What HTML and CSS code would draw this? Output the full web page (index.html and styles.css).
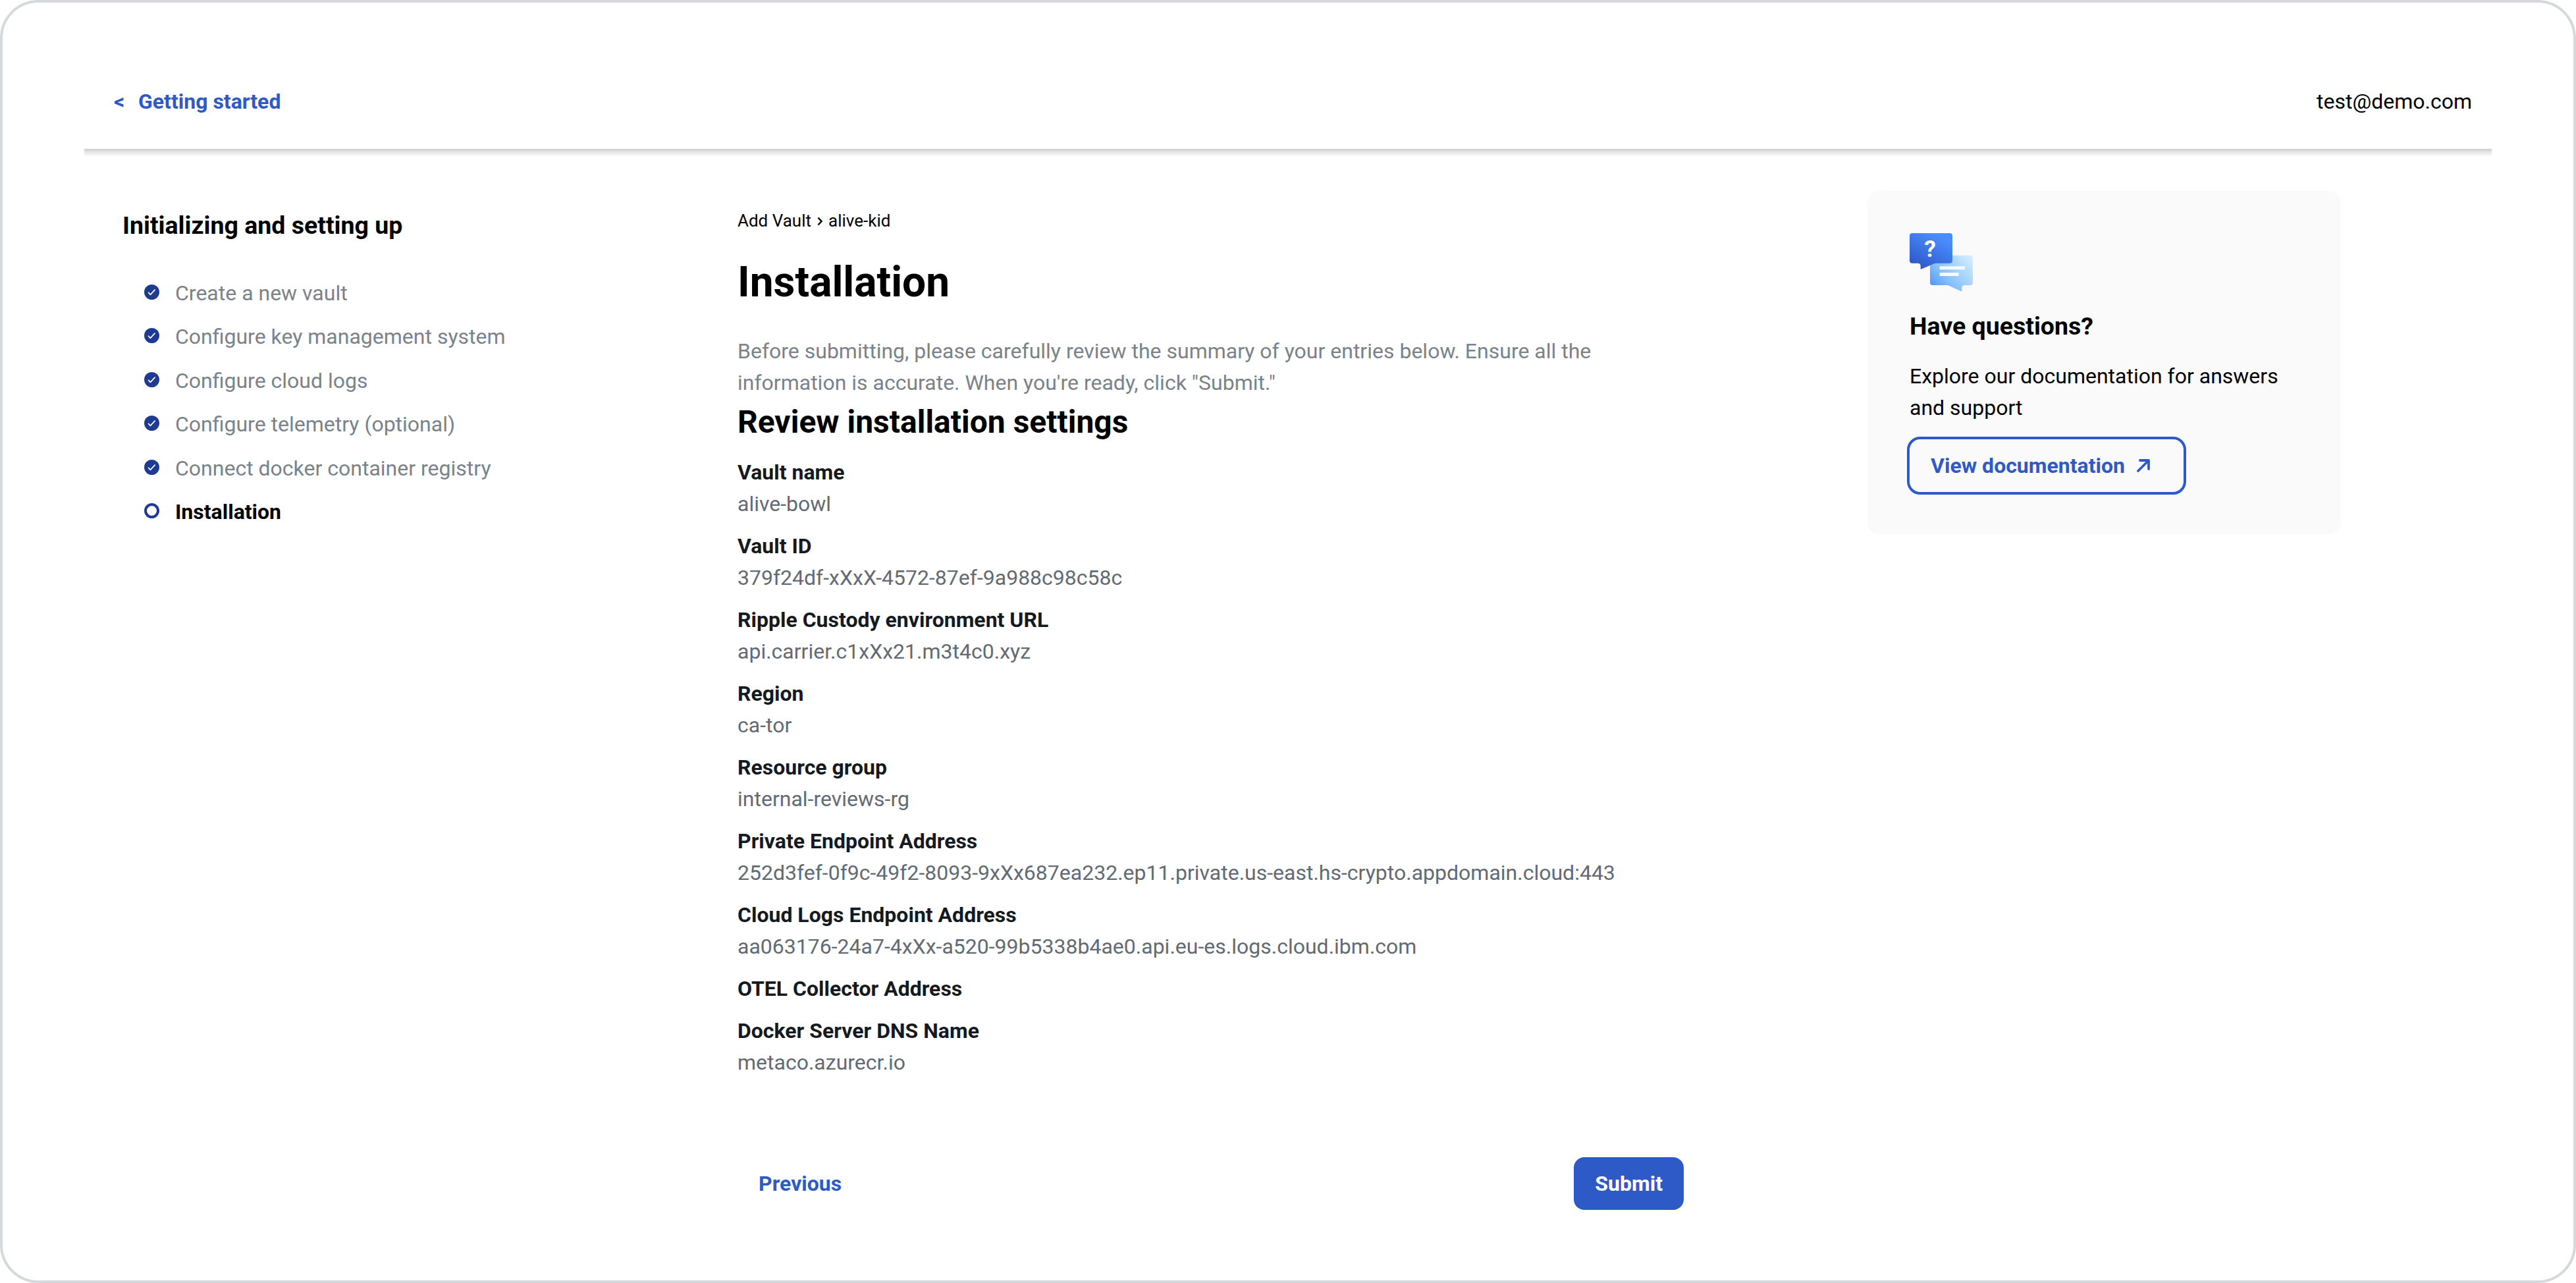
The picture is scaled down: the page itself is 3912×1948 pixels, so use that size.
FILE: index.html
```html
<!DOCTYPE html>
<html lang="en">
<head>
    <meta charset="UTF-8">
    <meta name="viewport" content="width=device-width, initial-scale=1.0">
    <title>Add Vault - Installation</title>
    <link rel="stylesheet" href="styles.css">
</head>
<body>
    <div class="page">
        <header class="header">
            <a class="back-link" href="#"><span class="back-arrow">&lt;</span>Getting started</a>
            <span class="user-email">test@demo.com</span>
        </header>
        <div class="divider"></div>

        <div class="content">
            <aside class="sidebar">
                <h3 class="sidebar-title">Initializing and setting up</h3>
                <ul class="steps">
                    <li class="step">
                        <svg class="step-icon" viewBox="0 0 24 24"><circle cx="12" cy="12" r="12"/><path d="M6.8 12.8l3 3.2 7-7.6"/></svg>
                        Create a new vault
                    </li>
                    <li class="step">
                        <svg class="step-icon" viewBox="0 0 24 24"><circle cx="12" cy="12" r="12"/><path d="M6.8 12.8l3 3.2 7-7.6"/></svg>
                        Configure key management system
                    </li>
                    <li class="step">
                        <svg class="step-icon" viewBox="0 0 24 24"><circle cx="12" cy="12" r="12"/><path d="M6.8 12.8l3 3.2 7-7.6"/></svg>
                        Configure cloud logs
                    </li>
                    <li class="step">
                        <svg class="step-icon" viewBox="0 0 24 24"><circle cx="12" cy="12" r="12"/><path d="M6.8 12.8l3 3.2 7-7.6"/></svg>
                        Configure telemetry (optional)
                    </li>
                    <li class="step">
                        <svg class="step-icon" viewBox="0 0 24 24"><circle cx="12" cy="12" r="12"/><path d="M6.8 12.8l3 3.2 7-7.6"/></svg>
                        Connect docker container registry
                    </li>
                    <li class="step current">
                        <span class="step-circle"></span>
                        Installation
                    </li>
                </ul>
            </aside>

            <main class="main">
                <nav class="breadcrumb">
                    <span>Add Vault</span>
                    <svg class="chevron" viewBox="0 0 8 14"><path d="M1.5 1.5L6.5 7L1.5 12.5"/></svg>
                    <span>alive-kid</span>
                </nav>
                <h1>Installation</h1>
                <p class="intro">Before submitting, please carefully review the summary of your entries below. Ensure all the information is accurate. When you're ready, click "Submit."</p>
                <h2>Review installation settings</h2>

                <dl class="settings">
                    <div class="setting">
                        <dt>Vault name</dt>
                        <dd>alive-bowl</dd>
                    </div>
                    <div class="setting">
                        <dt>Vault ID</dt>
                        <dd>379f24df-xXxX-4572-87ef-9a988c98c58c</dd>
                    </div>
                    <div class="setting">
                        <dt>Ripple Custody environment URL</dt>
                        <dd>api.carrier.c1xXx21.m3t4c0.xyz</dd>
                    </div>
                    <div class="setting">
                        <dt>Region</dt>
                        <dd>ca-tor</dd>
                    </div>
                    <div class="setting">
                        <dt>Resource group</dt>
                        <dd>internal-reviews-rg</dd>
                    </div>
                    <div class="setting">
                        <dt>Private Endpoint Address</dt>
                        <dd>252d3fef-0f9c-49f2-8093-9xXx687ea232.ep11.private.us-east.hs-crypto.appdomain.cloud:443</dd>
                    </div>
                    <div class="setting">
                        <dt>Cloud Logs Endpoint Address</dt>
                        <dd>aa063176-24a7-4xXx-a520-99b5338b4ae0.api.eu-es.logs.cloud.ibm.com</dd>
                    </div>
                    <div class="setting">
                        <dt>OTEL Collector Address</dt>
                    </div>
                    <div class="setting">
                        <dt>Docker Server DNS Name</dt>
                        <dd>metaco.azurecr.io</dd>
                    </div>
                </dl>

                <div class="actions">
                    <button class="btn btn-link">Previous</button>
                    <button class="btn btn-primary">Submit</button>
                </div>
            </main>

            <aside class="help-card">
                <svg class="help-icon" viewBox="60 42 288 267">
                    <defs>
                        <linearGradient id="darkBubble" x1="0.2" y1="1" x2="0.75" y2="0.15">
                            <stop offset="0" stop-color="#2e56c4"/>
                            <stop offset="1" stop-color="#488cff"/>
                        </linearGradient>
                        <linearGradient id="lightBubble" x1="0" y1="0.85" x2="1" y2="0.1">
                            <stop offset="0" stop-color="#4a94ff"/>
                            <stop offset="0.35" stop-color="#86c0fc"/>
                            <stop offset="1" stop-color="#d3eeff"/>
                        </linearGradient>
                    </defs>
                    <path fill="url(#lightBubble)" d="M165 143H336a12 12 0 0 1 12 12V267a12 12 0 0 1-12 12H309Q298 280 298 292V308L234 279H165a12 12 0 0 1-12-12V155a12 12 0 0 1 12-12Z"/>
                    <path fill="url(#darkBubble)" d="M72 42H243a12 12 0 0 1 12 12V167a12 12 0 0 1-12 12H176L110 207V192Q110 180 99 179H72a12 12 0 0 1-12-12V54a12 12 0 0 1 12-12Z"/>
                    <text class="help-mark" x="153" y="151">?</text>
                    <path fill="#f5faff" d="M197 193H312V208H197ZM197 222H284V237H197Z"/>
                </svg>
                <h3>Have questions?</h3>
                <p>Explore our documentation for answers and support</p>
                <a class="btn btn-outline" href="#">View documentation
                    <svg class="arrow-icon" viewBox="0 0 20 20"><path d="M2 18L17.5 2.5M5 2H18V15"/></svg>
                </a>
            </aside>
        </div>
    </div>
</body>
</html>
```

FILE: styles.css
```css
* {
    box-sizing: border-box;
}
body {
    margin: 0;
    background-color: #fff;
    font-family: Roboto, sans-serif;
    font-size: 32px;
    line-height: 48px;
    color: #000;
}
h1, h2, h3, p, ul, dl, dd {
    margin: 0;
    padding: 0;
}
.page {
    height: 1948px;
    padding: 0 124px;
    border: 4px solid #d5d9dc;
    border-radius: 58px;
}
.header {
    display: flex;
    justify-content: space-between;
    align-items: flex-start;
    height: 222px;
    padding: 126px 30px 0 45px;
}
.back-link {
    display: flex;
    color: #2e5ac8;
    font-weight: 700;
    text-decoration: none;
}
.back-arrow {
    width: 37px;
}
.divider {
    height: 12px;
    background: linear-gradient(#cecece, #e6e6e6 45%, #fff);
}
.content {
    display: flex;
    align-items: flex-start;
    padding-left: 58px;
}

/* Left steps */
.sidebar {
    width: 934px;
    padding-top: 76px;
}
h3 {
    font-size: 37.5px;
    line-height: 56px;
}
.steps {
    display: flex;
    flex-direction: column;
    gap: 18.4px;
    margin-top: 51px;
    padding-left: 33px;
    list-style: none;
}
.step {
    display: flex;
    align-items: center;
    gap: 24px;
    color: #7a828a;
}
.step.current {
    color: #000;
    font-weight: 700;
}
.step-icon,
.step-circle {
    width: 23px;
    height: 23px;
    margin-bottom: 3px;
}
.step-icon circle {
    fill: #1f3a93;
}
.step-icon path {
    fill: none;
    stroke: #fff;
    stroke-width: 1.8;
    stroke-linecap: round;
    stroke-linejoin: round;
}
.step-circle {
    border: 4px solid #1f3a93;
    border-radius: 50%;
}

/* Installation summary */
.main {
    width: 1437px;
    padding-top: 77px;
}
.breadcrumb {
    display: flex;
    align-items: center;
    gap: 9px;
    font-size: 26px;
    line-height: 40px;
}
.chevron {
    width: 8px;
    height: 14px;
    margin-top: 2px;
    fill: none;
    stroke: #000;
    stroke-width: 2.4;
}
h1 {
    margin-top: 34px;
    font-size: 64px;
    line-height: 80px;
}
.intro {
    width: 1340px;
    margin-top: 40px;
    color: #7a828a;
}
h2 {
    font-size: 48px;
    line-height: 72px;
}
.settings {
    display: flex;
    flex-direction: column;
    gap: 16px;
    margin-top: 16px;
}
.setting dt {
    color: #141a1f;
    font-weight: 700;
}
.setting dd {
    color: #626a73;
}
.actions {
    display: flex;
    justify-content: space-between;
    margin-top: 120px;
}
.btn {
    height: 80px;
    padding: 0 32px;
    border: none;
    border-radius: 16px;
    background: none;
    font: 700 32px/48px Roboto, sans-serif;
    cursor: pointer;
}
.btn-link {
    color: #2e5ac8;
}
.btn-primary {
    background-color: #2e5ac8;
    color: #fff;
}

/* Help card */
.help-card {
    width: 719px;
    height: 521px;
    margin: 52px 0 0 279px;
    padding: 64px;
    border-radius: 18px;
    background-color: #fafafa;
}
.help-icon {
    display: block;
    width: 96px;
    height: 89px;
}
.help-mark {
    fill: #fff;
    font-size: 106px;
    font-weight: 700;
    text-anchor: middle;
}
.help-card h3 {
    margin-top: 24px;
}
.help-card p {
    margin-top: 24px;
}
.btn-outline {
    display: flex;
    align-items: center;
    width: 424px;
    height: 88px;
    margin: 20px 0 0 -4px;
    padding: 0 32px;
    border: 4px solid #2e5ac8;
    border-radius: 20px;
    color: #2e5ac8;
    text-decoration: none;
}
.arrow-icon {
    width: 20px;
    height: 20px;
    margin-left: 18px;
    fill: none;
    stroke: #2e5ac8;
    stroke-width: 3.8;
    stroke-linecap: round;
    stroke-linejoin: round;
}
```
